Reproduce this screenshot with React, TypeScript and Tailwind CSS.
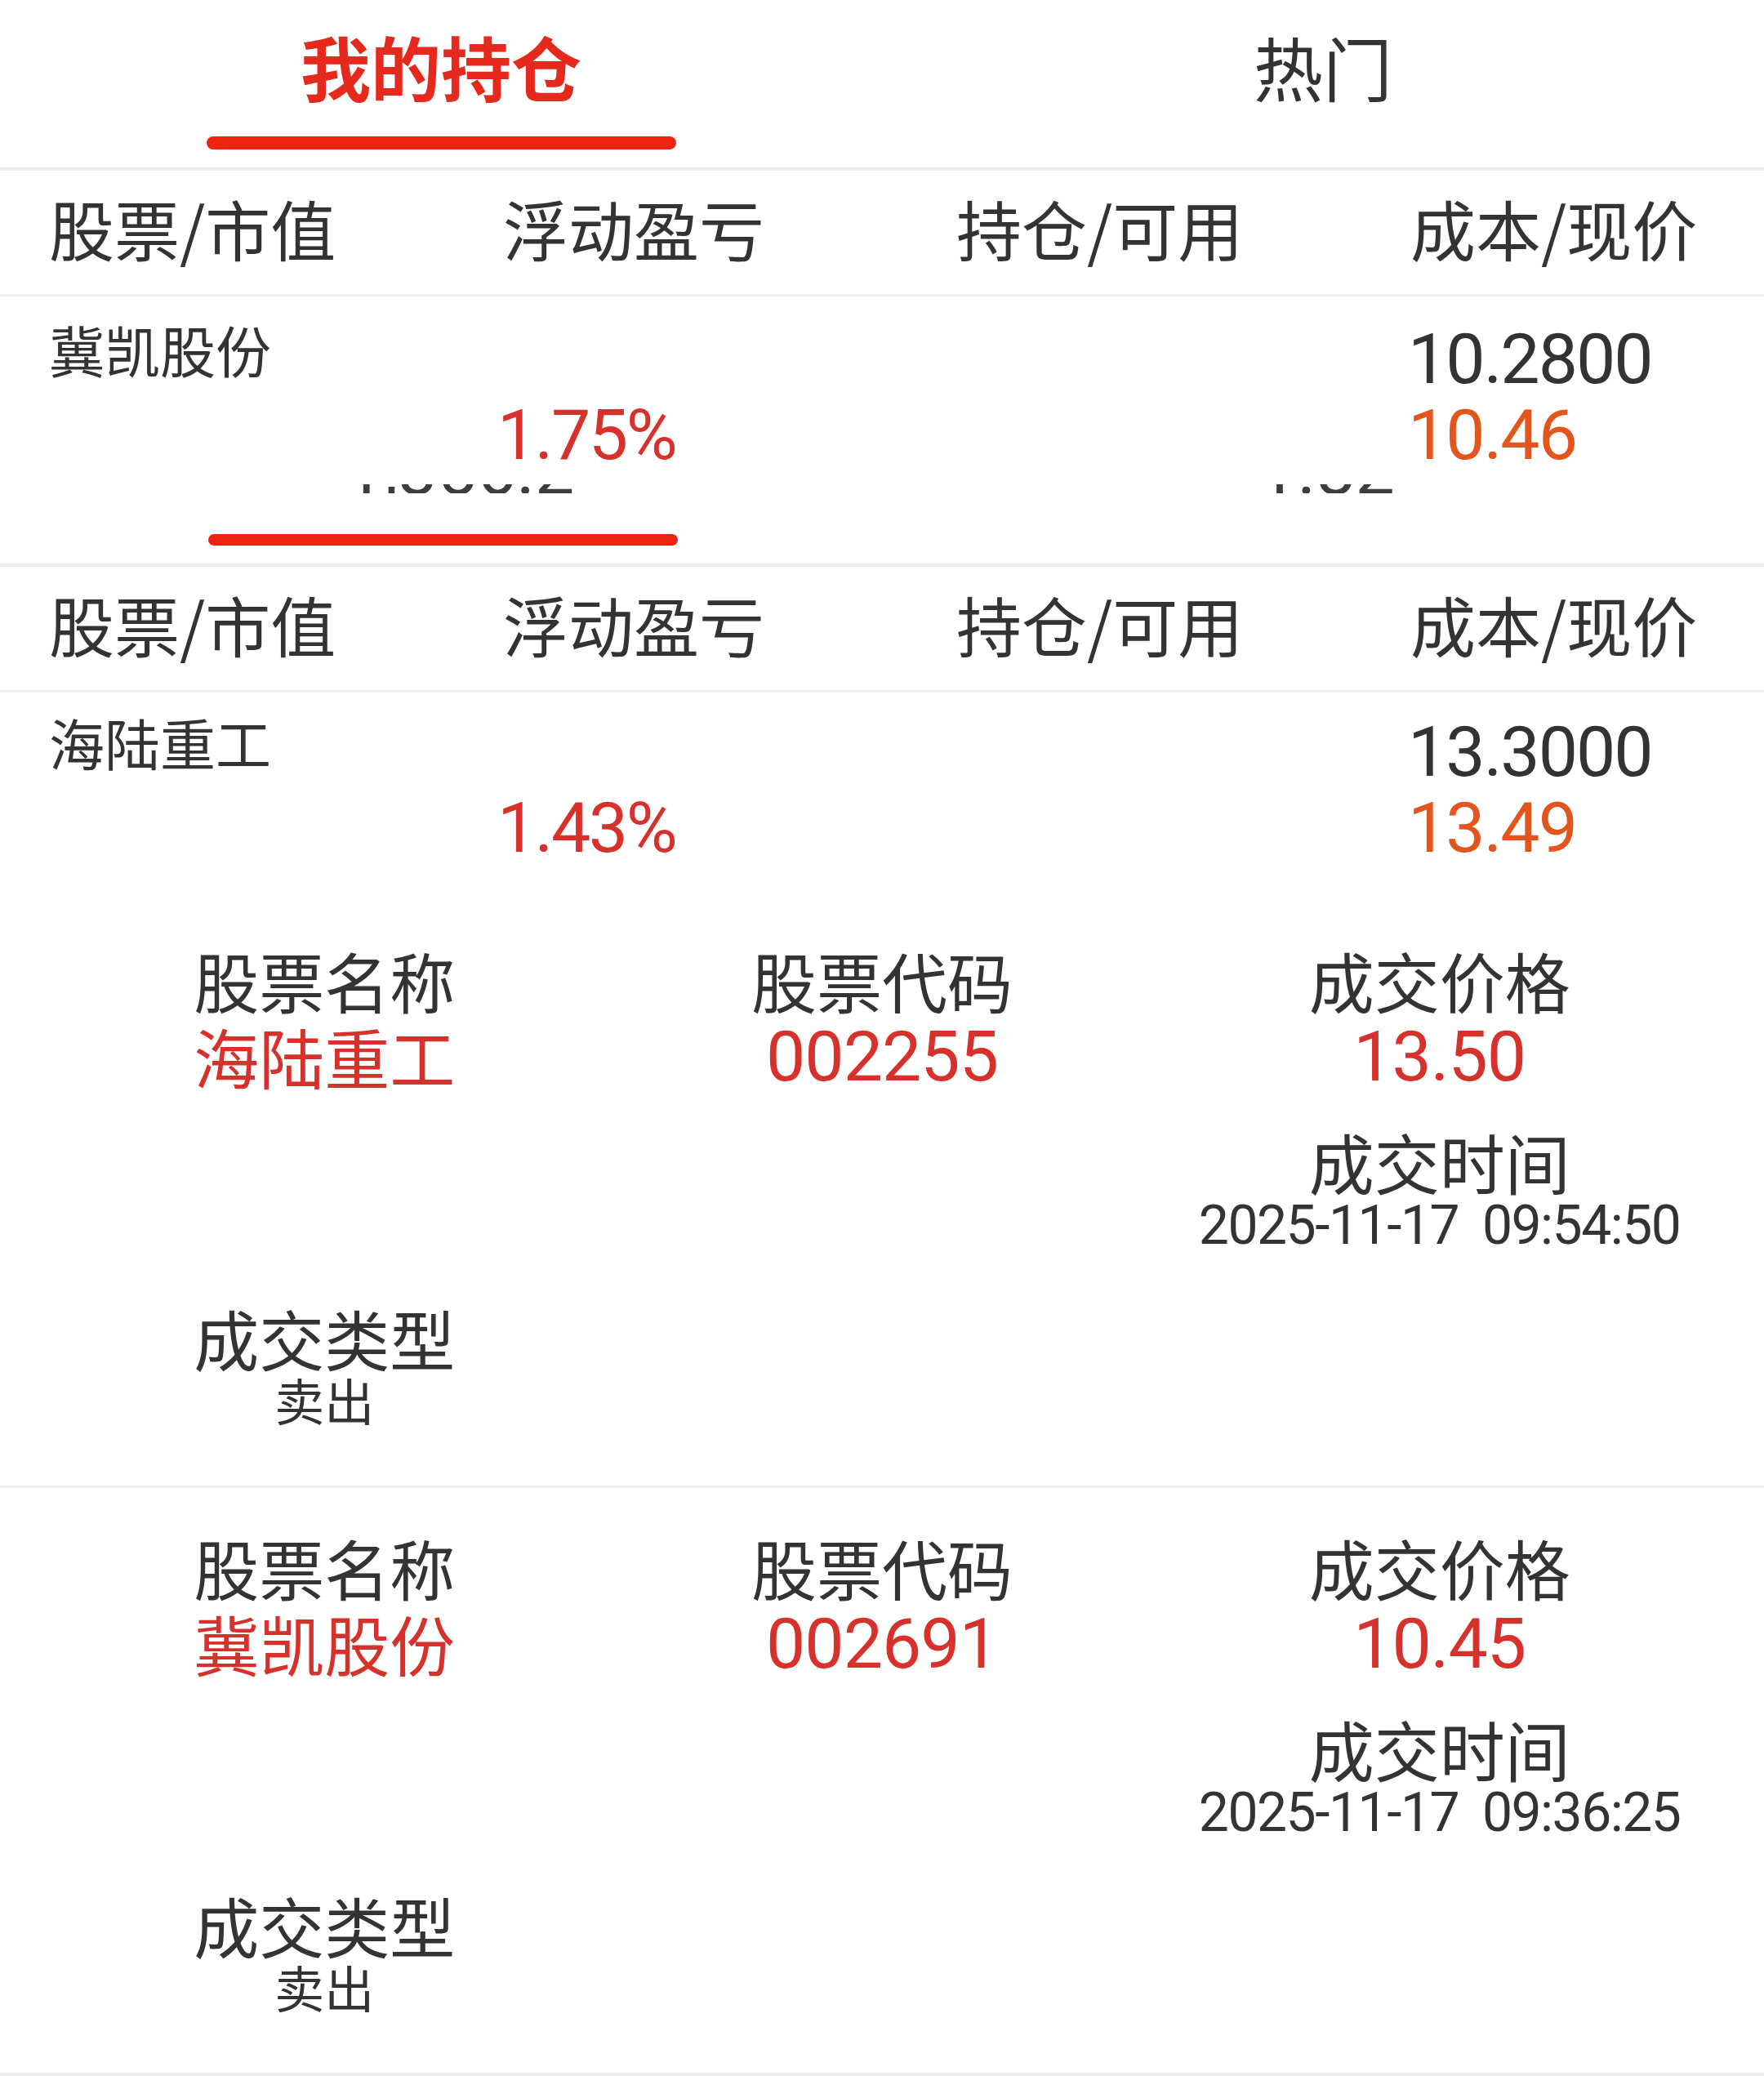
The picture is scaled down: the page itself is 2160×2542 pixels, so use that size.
import React from "react";

const cjk = "font-['Noto_Sans_CJK_SC',sans-serif]";
const num = "font-['Roboto','Noto_Sans_CJK_SC',sans-serif]";

type HoldRowProps = {
  name: string;
  pct: string;
  cost: string;
  price: string;
  className: string;
};

function HoldHeader() {
  return (
    <div
      className={`grid h-[151px] grid-cols-[556px_555px_556px_1fr] pl-[60px] pt-[29px] text-[80px] leading-none text-[#333333] ${cjk}`}
    >
      <div>股票/市值</div>
      <div>浮动盈亏</div>
      <div>持仓/可用</div>
      <div>成本/现价</div>
    </div>
  );
}

function HoldRow({ name, pct, cost, price, className }: HoldRowProps) {
  return (
    <div className={`grid grid-cols-[556px_555px_556px_1fr] content-start pl-[60px] ${className}`}>
      <div className={`-mt-[3px] text-[68px] leading-none text-[#333333] ${cjk}`}>{name}</div>
      <div className={`-ml-[7px] mt-[93px] text-[86px] leading-none tracking-[-2.5px] text-[#d6312a] ${num}`}>{pct}</div>
      <div />
      <div className={`-ml-[3px] flex flex-col gap-[7px] text-[86px] leading-none tracking-[-2px] ${num}`}>
        <div className="text-[#333333]">{cost}</div>
        <div className="text-[#e2561d]">{price}</div>
      </div>
    </div>
  );
}

type TradeProps = {
  name: string;
  code: string;
  price: string;
  time: string;
};

function Trade({ name, code, price, time }: TradeProps) {
  return (
    <div className={`grid h-[716px] grid-cols-3 content-start px-[56px] pt-[56px] text-[#333333] ${cjk}`}>
      <div className="flex flex-col items-center">
        <div className="text-[80px] leading-none">股票名称</div>
        <div className="mt-[13px] text-[80px] leading-none text-[#d6312a]">{name}</div>
      </div>
      <div className="flex flex-col items-center">
        <div className="text-[80px] leading-none">股票代码</div>
        <div className={`mt-[12px] text-[86px] leading-none tracking-[-1px] text-[#d6312a] ${num}`}>{code}</div>
      </div>
      <div className="flex flex-col items-center">
        <div className="text-[80px] leading-none">成交价格</div>
        <div className={`mt-[12px] text-[86px] leading-none tracking-[-1px] text-[#d6312a] ${num}`}>{price}</div>
        <div className="mt-[44px] text-[80px] leading-none">成交时间</div>
        <div className={`mt-[7px] text-[66px] leading-none tracking-[-1.5px] [word-spacing:14px] ${num}`}>{time}</div>
      </div>
      <div className="mt-[63px] flex flex-col items-center">
        <div className="text-[80px] leading-none">成交类型</div>
        <div className="mt-[6px] text-[61px] leading-none">卖出</div>
      </div>
    </div>
  );
}

export default function App() {
  return (
    <div className="w-[2160px] bg-white">
      {/* tabs */}
      <div className={`flex h-[205px] ${cjk}`}>
        <div className="flex w-1/2 flex-col items-center">
          <div className="mt-[38px] text-[86px] font-bold leading-none text-[#e5291c]">我的持仓</div>
          <div className="mt-[43px] h-[16px] w-[575px] rounded-full bg-[#ef2410]" />
        </div>
        <div className="flex w-1/2 flex-col items-center">
          <div className="mt-[38px] text-[85px] leading-none text-[#333333]">热门</div>
        </div>
      </div>
      <div className="h-[4px] bg-[#eeeeee]" />

      <HoldHeader />
      <div className="h-[3px] bg-[#efefef]" />
      <HoldRow name="冀凯股份" pct="1.75%" cost="10.2800" price="10.46" className="h-[230px] pt-[34px]" />

      {/* clipped edge of the next capture */}
      <div className="flex h-[11px] overflow-hidden">
        <div className={`ml-[422px] -mt-[60px] text-[86px] leading-none text-[#3d3d3d] ${num}`}>1,356.2</div>
        <div className={`ml-[837px] -mt-[60px] text-[86px] leading-none text-[#3d3d3d] ${num}`}>1.82</div>
      </div>
      <div className="pb-[22px] pl-[255px] pt-[50px]">
        <div className="h-[14px] w-[575px] rounded-full bg-[#ef2410]" />
      </div>
      <div className="h-[4px] bg-[#eeeeee]" />

      <HoldHeader />
      <div className="h-[3px] bg-[#efefef]" />
      <HoldRow name="海陆重工" pct="1.43%" cost="13.3000" price="13.49" className="h-[255px] pt-[30px]" />

      <Trade name="海陆重工" code="002255" price="13.50" time="2025-11-17 09:54:50" />
      <div className="h-[3px] bg-[#efefef]" />
      <Trade name="冀凯股份" code="002691" price="10.45" time="2025-11-17 09:36:25" />
      <div className="h-[4px] bg-[#eeeeee]" />
    </div>
  );
}
